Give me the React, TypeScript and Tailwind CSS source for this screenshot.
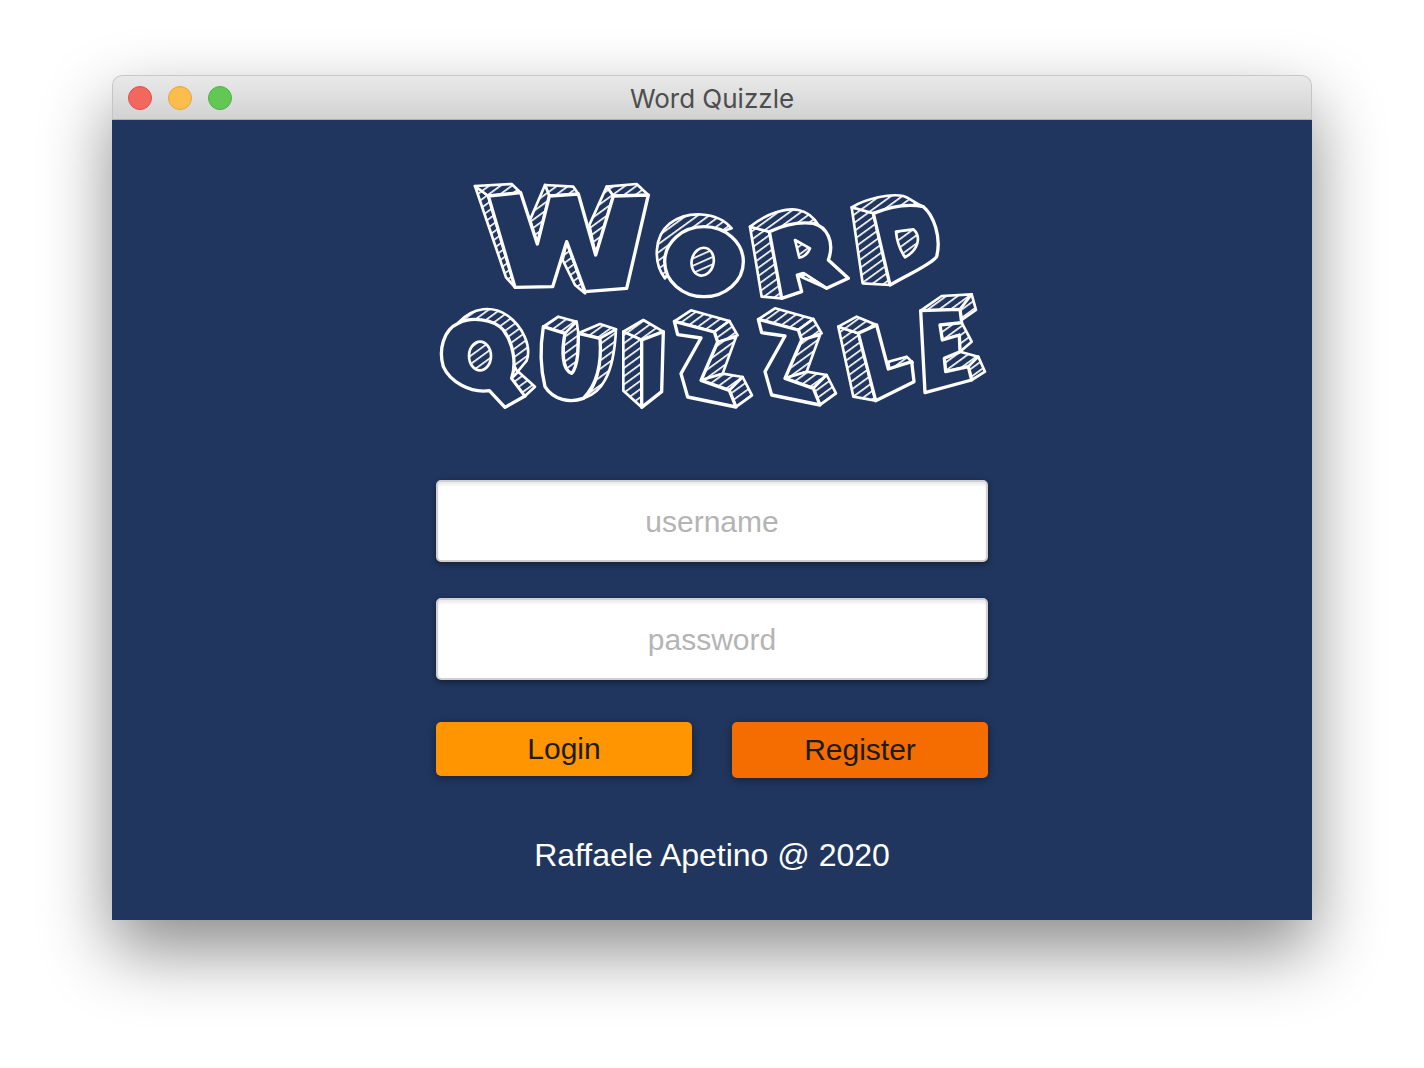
const faces: string[] = [
  // W
  "M135 48 L175 78 L255 352 L228 322 Z",
  "M135 48 L245 42 L272 68 L175 78 Z",
  "M345 45 L430 50 L445 72 L358 78 Z",
  "M345 45 L358 78 L322 222 L300 150 Z",
  "M530 50 L620 42 L655 75 L550 78 Z",
  "M530 50 L550 78 L497 255 L478 165 Z",
  "M410 215 L465 370 L435 345 L398 270 Z",
  // O back
  "M705 325 C670 280 670 200 720 160 C770 122 860 122 905 175 L830 200 L720 300 Z",
  // Q
  "M85 458 C130 408 190 408 230 435 C280 470 305 530 290 572 L262 606 L240 560 L200 470 Z",
  // U
  "M340 470 L385 440 L440 455 L405 490 Z",
  "M445 490 L510 462 L558 478 L510 505 Z",
  "M510 505 L558 478 C555 540 548 590 525 630 C510 660 490 675 462 685 C500 650 512 600 510 505 Z",
  "M405 490 L440 455 L445 490 C445 540 445 590 425 610 C400 605 395 540 405 490 Z",
  // I
  "M580 485 L640 450 L700 485 L635 510 Z",
  "M580 485 L635 510 L635 712 L580 662 Z",
];

const faces2: string[] = [
  // R
  "M120 170 L178 185 L215 385 L155 380 Z",
  "M120 170 C170 130 230 112 265 120 C290 125 310 140 325 165 L240 165 L178 185 Z",
  // D
  "M425 112 L490 130 L540 345 L458 340 Z",
  "M425 112 C470 85 540 70 580 78 C600 85 615 100 640 110 L490 130 Z",
  // L
  "M385 470 L445 490 L497 692 L430 680 Z",
  "M385 470 L440 440 L500 465 L445 490 Z",
  "M535 575 L590 560 L608 578 L538 598 Z",
  // E
  "M632 422 L695 378 L785 373 L750 418 Z",
  "M750 418 L785 373 L798 420 L755 450 Z",
  "M690 465 L755 458 L785 515 L750 545 L748 495 L697 510 Z",
  "M703 565 L750 545 L805 560 L775 590 L707 605 Z",
  "M805 560 L825 605 L785 630 L775 590 Z",
];

const zedFaces: string[] = [
  "M145 448 L195 415 L310 447 L265 480 Z",
  "M265 480 L310 447 L335 490 L275 510 Z",
  "M275 510 L330 495 L290 605 L225 625 Z",
  "M225 625 L290 605 L350 615 L310 655 Z",
  "M310 655 L350 615 L378 670 L330 705 Z",
];
const zedFront =
  "M145 448 L155 488 L225 498 L165 605 L185 675 L330 705 L310 655 L225 625 L275 510 L265 480 Z";

const fronts: string[] = [
  "M175 78 L272 68 L322 222 L358 78 L445 72 L497 255 L550 78 L655 75 L590 355 L465 365 L410 215 L368 350 L255 352 Z",
  "M85 460 C40 480 25 540 40 590 C60 635 120 670 178 662 L225 712 L285 678 L245 625 C260 580 250 520 220 480 C190 445 120 440 85 460 Z",
  "M340 470 L405 490 C395 540 395 600 425 610 C445 590 445 530 445 490 L510 505 C515 570 505 640 460 685 C420 700 370 690 345 650 C330 590 332 520 340 470 Z",
  "M635 510 L700 485 L695 665 L635 712 Z",
];

const fronts2: string[] = [
  "M178 185 C220 165 270 155 310 160 C350 170 375 215 355 270 L415 325 L350 355 L280 310 L262 315 L275 365 L215 385 Z",
  "M490 130 C540 110 590 100 640 110 C670 135 695 200 680 260 C660 285 600 310 540 345 Z",
  "M445 490 L500 465 L535 597 L605 575 L612 635 L497 692 Z",
  "M632 422 L750 418 L755 458 L690 465 L697 510 L748 495 L750 545 L703 565 L707 605 L775 590 L785 630 L645 668 Z",
];

const overlay = "M245 625 L265 605 L315 650 L285 678 Z";

const holes2: string[] = [
  "M255 210 L300 235 C295 250 280 262 268 263 Z",
  "M558 185 L610 178 C635 200 625 240 585 262 C570 240 560 210 558 185 Z",
  "M285 312 L350 355 L268 318 Z",
];

function Logo() {
  const line = {
    stroke: "#ffffff",
    strokeWidth: 8,
    strokeLinejoin: "round" as const,
    strokeLinecap: "round" as const,
  };
  const bold = { ...line, strokeWidth: 10 };
  return (
    <svg width="570" height="250" viewBox="-9 0 1710 750" role="img" aria-label="Word Quizzle">
      <defs>
        <pattern id="hatch" width="20" height="20" patternUnits="userSpaceOnUse" patternTransform="rotate(-36)">
          <rect width="20" height="20" fill="#20365f" />
          <rect width="20" height="5" fill="#ffffff" />
        </pattern>
      </defs>
      {faces.map((d) => (
        <path key={d} d={d} fill="url(#hatch)" {...line} />
      ))}
      <ellipse cx="822" cy="275" rx="118" ry="105" fill="#20365f" {...bold} />
      <ellipse cx="818" cy="275" rx="33" ry="42" fill="url(#hatch)" {...line} transform="rotate(12 818 275)" />
      {fronts.map((d) => (
        <path key={d} d={d} fill="#20365f" {...bold} />
      ))}
      <path d={overlay} fill="url(#hatch)" {...line} />
      <ellipse cx="150" cy="558" rx="33" ry="43" fill="url(#hatch)" {...line} />
      <g transform="translate(-252 6)">
        {zedFaces.map((d) => (
          <path key={d} d={d} transform="translate(840 0)" fill="url(#hatch)" {...line} />
        ))}
        <path d={zedFront} transform="translate(840 0)" fill="#20365f" {...bold} />
      </g>
      <g transform="translate(840 0)">
        {zedFaces.map((d) => (
          <path key={d} d={d} fill="url(#hatch)" {...line} />
        ))}
        <path d={zedFront} fill="#20365f" {...bold} />
        {faces2.map((d) => (
          <path key={d} d={d} fill="url(#hatch)" {...line} />
        ))}
        {fronts2.map((d) => (
          <path key={d} d={d} fill="#20365f" {...bold} />
        ))}
        {holes2.map((d) => (
          <path key={d} d={d} fill="url(#hatch)" {...line} />
        ))}
      </g>
    </svg>
  );
}

function Field({ placeholder, type }: { placeholder: string; type: string }) {
  return (
    <input
      type={type}
      placeholder={placeholder}
      readOnly
      className="w-[552px] h-[82px] pt-[2px] rounded-[5px] border-2 border-[#cfcfcf] bg-white text-center text-[30px] text-black placeholder:text-[#b4b4b4] placeholder:opacity-100 shadow-[inset_0_3px_3px_rgba(0,0,0,0.08),0_2px_6px_rgba(0,0,0,0.45)] outline-none"
    />
  );
}

export default function App() {
  return (
    <div className="w-full h-[1068px] bg-white pt-[75px] overflow-hidden font-['Liberation_Sans',Arial,sans-serif]">
      <div className="w-[1200px] h-[845px] mx-auto flex flex-col rounded-t-[10px] shadow-[0_30px_70px_rgba(0,0,0,0.46)]">
        <div className="relative h-[45px] shrink-0 rounded-t-[10px] border border-b-[#aeaeae] border-x-[#c4c4c4] border-t-[#c8c8c8] bg-gradient-to-b from-[#e9e9e9] to-[#d2d2d2] flex items-center justify-center">
          <div className="absolute left-[15px] top-[10px] flex gap-4">
            <span className="w-6 h-6 rounded-full bg-[#f2675e] border border-[#dd5249]" />
            <span className="w-6 h-6 rounded-full bg-[#fdbd4c] border border-[#e4a63c]" />
            <span className="w-6 h-6 rounded-full bg-[#62c755] border border-[#50b244]" />
          </div>
          <span className="font-['Inter',sans-serif] text-[26px] leading-none text-[#4d4d4d] pt-[2px]">Word Quizzle</span>
        </div>
        <div className="flex-1 bg-[#20365f] flex flex-col items-center pt-[50px]">
          <Logo />
          <div className="mt-[60px] flex flex-col gap-9">
            <Field placeholder="username" type="text" />
            <Field placeholder="password" type="password" />
          </div>
          <div className="mt-[42px] w-[552px] flex justify-between items-start">
            <button className="w-[256px] h-[54px] rounded-[5px] bg-[#ff9500] text-[30px] leading-[54px] text-[#1c1c1c] shadow-[0_2px_8px_rgba(0,0,0,0.4)]">Login</button>
            <button className="w-[256px] h-[56px] rounded-[5px] bg-[#f56c00] text-[30px] leading-[54px] text-[#1c1c1c] shadow-[0_2px_8px_rgba(0,0,0,0.4)]">Register</button>
          </div>
          <p className="mt-[58px] text-[32px] leading-[38px] text-white">Raffaele Apetino @ 2020</p>
        </div>
      </div>
    </div>
  );
}
